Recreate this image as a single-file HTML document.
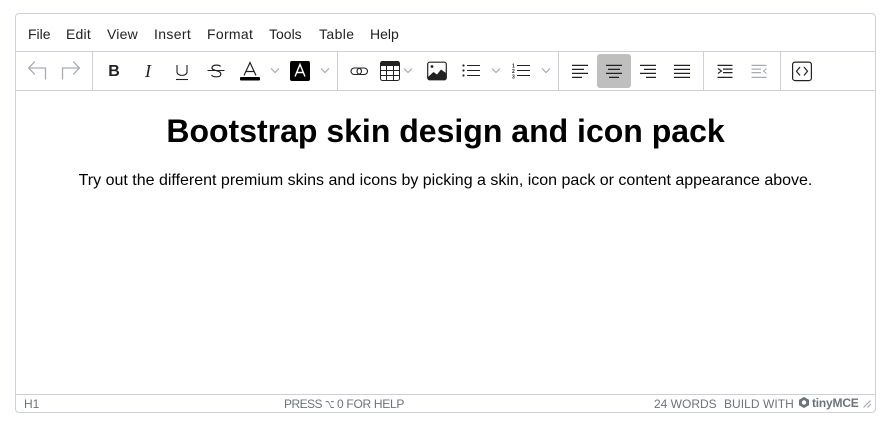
<!DOCTYPE html>
<html><head><meta charset="utf-8">
<style>
html,body{margin:0;padding:0;background:#fff;width:896px;height:427px;overflow:hidden}
body{position:relative;font-family:"Liberation Sans",sans-serif}
.box{position:absolute;left:15px;top:13px;width:859px;height:398px;border:1px solid #ccd0da;border-radius:4px}
.hl{position:absolute;height:1px;background:#ccd0da;left:16px;width:859px}
.vl{position:absolute;width:1px;background:#ccd0da;top:52px;height:38px}
.m{position:absolute;top:26px;font-size:14px;line-height:16px;color:#222;white-space:nowrap;letter-spacing:.2px}
.s{position:absolute;top:397px;font-size:12px;line-height:14px;color:#6d737b;white-space:nowrap}
svg.a{position:absolute;left:0;top:0}
h1{position:absolute;left:16px;width:859px;top:112px;margin:0;text-align:center;font-size:32px;line-height:38px;font-weight:700;color:#000}
p{position:absolute;left:16px;width:859px;top:171px;margin:0;text-align:center;font-size:16px;line-height:19px;color:#000}
.on{position:absolute;left:597px;top:54px;width:34px;height:34px;background:#bfbfbf;border-radius:3px}
</style></head><body>
<div class="box"></div>
<div class="hl" style="top:51px"></div>
<div class="hl" style="top:90px"></div>
<div class="hl" style="top:394px"></div>
<div class="vl" style="left:92px"></div>
<div class="vl" style="left:337px"></div>
<div class="vl" style="left:558px"></div>
<div class="vl" style="left:703px"></div>
<div class="vl" style="left:780px"></div>
<span class="m" style="left:28px;letter-spacing:0">File</span>
<span class="m" style="left:66px">Edit</span>
<span class="m" style="left:107px">View</span>
<span class="m" style="left:154px;letter-spacing:.35px">Insert</span>
<span class="m" style="left:207px;letter-spacing:.3px">Format</span>
<span class="m" style="left:269px;letter-spacing:0">Tools</span>
<span class="m" style="left:319px;letter-spacing:.4px">Table</span>
<span class="m" style="left:370px;letter-spacing:0">Help</span>
<div class="on"></div>
<svg class="a" width="896" height="427" viewBox="0 0 896 427" fill="none">
<!-- undo / redo -->
<g stroke="#a9adb3" stroke-width="1.300" stroke-linecap="round" stroke-linejoin="round">
<path d="M28.500 68H45.500V79M34.500 62L28.500 68L34.500 74"/>
<path d="M79.500 68H62.500V79M73.500 62L79.500 68L73.500 74"/>
</g>
<!-- underline, strike -->
<g stroke="#222" fill="none">
<path d="M177 65V72C177 76.500 187 76.500 187 72V65" stroke-width="1.100"/>
<path d="M176 79.500H188" stroke-width="1.100"/>
<path d="M207.500 70.500H224.500" stroke-width="1.100"/>
<path d="M220.500 66.500C219 64.500 212.500 64.500 212 67.500C211.700 69.500 214 70 216 70.500C219 71.300 221 72 220.800 74.500C220.500 77.500 213 77.500 211.500 75" stroke-width="1.200"/>
</g>
<!-- text colour -->
<path d="M244 75.500L250 62.500L256 75.500M246 71.500H254" stroke="#222" stroke-width="1.200"/>
<rect x="240" y="77" width="20" height="3.500" rx="1" fill="#000"/>
<!-- highlight -->
<rect x="290" y="61" width="20" height="20" rx="2" fill="#000"/>
<path d="M295 76.500L300 64.500L305 76.500M296.800 72.500H303.200" stroke="#fff" stroke-width="1.400"/>
<!-- chevrons -->
<g stroke="#a0a4aa" stroke-width="1.100">
<path d="M271 68.500L275 72.500L279 68.500"/>
<path d="M321 68.500L325 72.500L329 68.500"/>
<path d="M404 68.500L408 72.500L412 68.500"/>
<path d="M492 68.500L496 72.500L500 68.500"/>
<path d="M542 68.500L546 72.500L550 68.500"/>
</g>
<!-- link -->
<g stroke="#222" stroke-width="1.100">
<rect x="351" y="68" width="10.500" height="6.500" rx="3.250"/>
<rect x="357" y="68" width="10.500" height="6.500" rx="3.250"/>
</g>
<!-- table -->
<rect x="380.500" y="61.500" width="19" height="19" rx="2" stroke="#222" stroke-width="1"/>
<path d="M380.500 63a2 2 0 0 1 2-2h15a2 2 0 0 1 2 2V66H380.500Z" fill="#222"/>
<path d="M386.500 66V80M393.500 66V80M381 70.500H399M381 75.500H399" stroke="#222" stroke-width="1"/>
<!-- image -->
<rect x="427.700" y="62.200" width="18.600" height="17.600" rx="2" stroke="#222" stroke-width="1.200"/>
<path d="M428 77L433.500 72L437 74.500L441 69.500L446 73V78a1.500 1.500 0 0 1-1.500 1.500H429.500a1.500 1.500 0 0 1-1.500-1.500Z" fill="#222"/>
<circle cx="432" cy="66.500" r="1.400" fill="#222"/>
<!-- lists -->
<g fill="#222">
<circle cx="463.500" cy="65.500" r="1.100"/><circle cx="463.500" cy="70.500" r="1.100"/><circle cx="463.500" cy="75.500" r="1.100"/>
<path d="M467 65h13v1h-13zM467 70h13v1h-13zM467 75h13v1h-13z"/>
<path d="M517 65h13v1h-13zM517 70h13v1h-13zM517 75h13v1h-13z"/>
<!-- alignment -->
<path d="M572 64.800h16v1.200h-16zM572 68.800h12v1.200h-12zM572 72.800h16v1.200h-16zM572 76.800h10v1.200h-10z"/>
<path d="M606 64.800h16v1.200h-16zM608 68.800h12v1.200h-12zM606 72.800h16v1.200h-16zM609 76.800h10v1.200h-10z"/>
<path d="M640 64.800h16v1.200h-16zM644 68.800h12v1.200h-12zM640 72.800h16v1.200h-16zM646 76.800h10v1.200h-10z"/>
<path d="M674 64.800h16v1.200h-16zM674 68.800h16v1.200h-16zM674 72.800h16v1.200h-16zM674 76.800h16v1.200h-16z"/>
<!-- indent -->
<path d="M717.500 64.800h15v1.200h-15zM723 68.500h9.500v1.200H723zM723 72h9.500v1.200H723zM717.500 76.800h15v1.200h-15z"/>
<!-- outdent -->
<path fill="#a9adb3" d="M751.500 64.800h15v1.200h-15zM751.500 68.500h9.500v1.200h-9.500zM751.500 72h9.500v1.200h-9.500zM751.500 76.800h15v1.200h-15z"/>
</g>
<text x="512" y="67.500" font-family="Liberation Sans" font-size="5" font-weight="700" fill="#222">1</text>
<text x="512" y="73" font-family="Liberation Sans" font-size="5" font-weight="700" fill="#222">2</text>
<text x="512" y="78.500" font-family="Liberation Sans" font-size="5" font-weight="700" fill="#222">3</text>
<path d="M718 68.500L721.500 71L718 73.500" stroke="#222" stroke-width="1.100"/>
<path d="M766.500 68.500L763.500 71L766.500 73.500" stroke="#a9adb3" stroke-width="1.100"/>
<!-- code -->
<rect x="792.600" y="62.100" width="18.800" height="18.500" rx="2.500" stroke="#222" stroke-width="1.200"/>
<path d="M800 67L796.500 71.300L800 75.500M804 67L807.500 71.300L804 75.500" stroke="#222" stroke-width="1.200"/>
<!-- tiny logo -->
<path d="M804 397.500L808.500 400V405L804 407.500L799.500 405V400Z" fill="#6d737b" stroke="#6d737b" stroke-width="1" stroke-linejoin="round"/>
<circle cx="804" cy="402.500" r="2.200" fill="#fff"/>
<!-- resize handle -->
<path d="M863.500 407.500L870.500 400.500M867.500 407.500L871 404" stroke="#9a9ea5" stroke-width="1"/>
</svg>
<b style="position:absolute;left:107px;top:62px;font-size:16px;line-height:19px;color:#222;width:14px;text-align:center">B</b>
<i style="position:absolute;left:141px;top:62px;font-size:18px;line-height:19px;font-family:'Liberation Serif',serif;color:#222;width:14px;text-align:center">I</i>
<h1>Bootstrap skin design and icon pack</h1>
<p>Try out the different premium skins and icons by picking a skin, icon pack or content appearance above.</p>
<span class="s" style="left:24px">H1</span>
<span class="s" style="left:284px;letter-spacing:-.55px">PRESS</span>
<span class="s" style="left:325px;display:inline-block;transform:scaleX(.68);transform-origin:0 50%">⌥</span>
<span class="s" style="left:337px;letter-spacing:-.3px">0 FOR HELP</span>
<span class="s" style="left:654px">24 WORDS</span>
<span class="s" style="left:724px;letter-spacing:.05px">BUILD WITH</span>
<b style="position:absolute;left:812px;top:396px;font-size:12px;line-height:14px;color:#6d737b;white-space:nowrap;letter-spacing:-.2px">tinyMCE</b>
</body></html>
